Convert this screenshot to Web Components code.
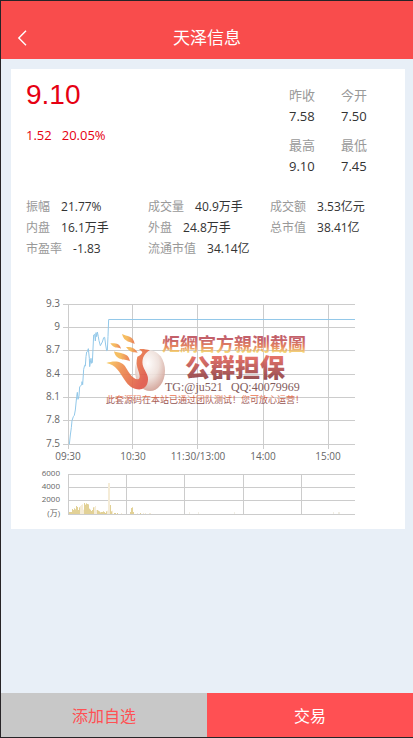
<!DOCTYPE html>
<html lang="zh-CN">
<head>
<meta charset="utf-8">
<meta name="viewport" content="width=device-width, initial-scale=1">
<title>天泽信息</title>
<style>
	body{
		margin: 0;
		font-family: "Open Sans", "Noto Sans CJK SC", sans-serif;
		color: #333;
	}
</style>
</head>
<body>
<stock-page>
	<page-header slot="header">天泽信息</page-header>
	<stock-card>
		<stock-quote price="9.10" change="1.52" percent="20.05%"></stock-quote>
		<stock-detail></stock-detail>
		<stock-chart></stock-chart>
	</stock-card>
	<action-bar slot="footer"></action-bar>
</stock-page>

<script>
class StockPage extends HTMLElement {

	constructor(){
		super();
		this.shadow = this.attachShadow({mode : 'open'});
		this.shadow.innerHTML = `
			<style>
				:host{
					display: flex;
					flex-direction: column;
					box-sizing: border-box;
					min-height: 100vh;
					border: 1px solid #272427;
					border-right: 0;
					background-color: #e8eff7;
				}
				main{
					flex: 1;
					padding: 10px 8px 10px 10px;
				}
			</style>
			<slot name="header"></slot>
			<main><slot></slot></main>
			<slot name="footer"></slot>
		`;
	}
}

class PageHeader extends HTMLElement {

	constructor(){
		super();
		this.shadow = this.attachShadow({mode : 'open'});
		this.shadow.innerHTML = `
			<style>
				:host{
					display: block;
					background-color: #f94c4c;
					color: #fff;
				}
				header{
					display: grid;
					grid-template-columns: 42px 1fr 42px;
					align-items: center;
					padding-top: 15px;
				}
				button{
					display: flex;
					align-items: center;
					height: 43px;
					padding: 0 0 0 16px;
					border: 0;
					background: none;
					color: inherit;
				}
				h1{
					margin: 0;
					font-size: 17px;
					font-weight: 400;
					line-height: 24px;
					text-align: center;
				}
			</style>
			<header>
				<button type="button" aria-label="返回">
					<svg width="10" height="16" viewBox="0 0 10 16" fill="none" stroke="currentColor" stroke-width="1.4"><path d="M9 .8 1.8 8 9 15.2"/></svg>
				</button>
				<h1><slot></slot></h1>
			</header>
		`;
	}
}

class StockCard extends HTMLElement {

	constructor(){
		super();
		this.shadow = this.attachShadow({mode : 'open'});
		this.shadow.innerHTML = `
			<style>
				:host{
					display: block;
					padding-top: 16px;
					background-color: #fff;
				}
			</style>
			<slot></slot>
		`;
	}
}

class StockQuote extends HTMLElement {

	constructor(){
		super();
		this.shadow = this.attachShadow({mode : 'open'});
	}

	connectedCallback(){
		this._updateRendering();
	}

	_updateRendering(){
		let items = [['昨收', '7.58'], ['今开', '7.50'], ['最高', '9.10'], ['最低', '7.45']];
		this.shadow.innerHTML = `
			<style>
				:host{
					display: flex;
					justify-content: space-between;
					padding: 0 38px 0 15px;
					font-size: 13px;
					line-height: 21px;
				}
				.now{
					color: #e60012;
				}
				.price{
					font-family: "Liberation Sans", sans-serif;
					font-size: 28px;
					line-height: 20px;
				}
				.change{
					display: flex;
					gap: 10px;
					margin-top: 20px;
				}
				dl{
					display: grid;
					grid-template-columns: auto auto;
					gap: 8px 26px;
					margin: 0;
				}
				dt{
					color: #999;
				}
				dd{
					margin: 0;
				}
			</style>
			<div class="now">
				<div class="price">${this.getAttribute('price')}</div>
				<div class="change"><span>${this.getAttribute('change')}</span><span>${this.getAttribute('percent')}</span></div>
			</div>
			<dl>${items.map(item => `<div><dt>${item[0]}</dt><dd>${item[1]}</dd></div>`).join('')}</dl>
		`;
	}
}

class StockDetail extends HTMLElement {

	constructor(){
		super();
		this.shadow = this.attachShadow({mode : 'open'});
	}

	connectedCallback(){
		let items = [
			['振幅', '21.77%'], ['成交量', '40.9万手'], ['成交额', '3.53亿元'],
			['内盘', '16.1万手'], ['外盘', '24.8万手'], ['总市值', '38.41亿'],
			['市盈率', '-1.83'], ['流通市值', '34.14亿']
		];
		this.shadow.innerHTML = `
			<style>
				:host{
					display: block;
					padding: 19px 13px 31px 15px;
					font-size: 12px;
					line-height: 21px;
				}
				dl{
					display: grid;
					grid-template-columns: repeat(3, 1fr);
					margin: 0;
				}
				div{
					display: flex;
					gap: 11px;
					white-space: nowrap;
				}
				dt{
					color: #999;
				}
				dd{
					margin: 0;
				}
			</style>
			<dl>${items.map(item => `<div><dt>${item[0]}</dt><dd>${item[1]}</dd></div>`).join('')}</dl>
		`;
	}
}

class StockChart extends HTMLElement {

	constructor(){
		super();
		this.shadow = this.attachShadow({mode : 'open'});
	}

	connectedCallback(){
		this._updateRendering();
	}

	_grid(){
		let rows = [14, 37, 60, 84, 107, 130, 154];
		let cols = [57, 121, 186, 252, 317];
		let vol_rows = [184, 197, 210, 224];
		let vol_cols = [57, 115, 173, 232, 290];
		return rows.map(y => `M52 ${y}.5H344`).join('')
			+ cols.map(x => `M${x}.5 14V159`).join('')
			+ vol_rows.map(y => `M57 ${y}.5H344`).join('')
			+ vol_cols.map(x => `M${x}.5 184V225`).join('');
	}

	_labels(){
		let prices = ['9.3', '9', '8.7', '8.4', '8.1', '7.8', '7.5'];
		let price_y = [17, 40, 63, 87, 110, 133, 157];
		let times = ['09:30', '10:30', '11:30/13:00', '14:00', '15:00'];
		let time_x = [57, 122, 187, 252, 317];
		let volumes = ['6000', '4000', '2000', '(万)'];
		let volume_y = [186, 199, 212, 226];
		return prices.map((t, i) => `<text x="49" y="${price_y[i]}" text-anchor="end">${t}</text>`).join('')
			+ times.map((t, i) => `<text x="${time_x[i]}" y="170" text-anchor="middle">${t}</text>`).join('')
			+ volumes.map((t, i) => `<text class="volume" x="49" y="${volume_y[i]}" text-anchor="end">${t}</text>`).join('');
	}

	// one bar per minute, three units of height make one pixel
	_bars(){
		let heights = [6, 6, 6, 15, 12, 17, 14, 24, 21, 12, 20, 24, 27, 29, 13, 33, 28, 32, 30, 29, 16, 13, 9, 12, 20, 21, 24,
			12, 12, 10, 8, 5, 6, 6, 8, 6, 3, 8, 10, 93, 93, 27, 8, 10, 0, 3, 3, 0, 3, 0, 0, 0, 3, 0, 0, 0, 0, 0, 0, 0, 0, 6,
			18, 20, 6, 0, 0, 0, 3, 0, 0, 3, 0, 0, 3, 0, 3, 0, 0, 0, 3, 3];
		let pale = [11, 12, 13, 14, 25, 26, 27, 38, 39, 40, 43, 52, 68, 74, 76, 80, 81];
		let bars = heights.map((h, i) => {
			let fill = pale.includes(i) ? '#f5ecd7' : '#e2d196';
			return h ? `<rect x="${58 + i}" y="${(672 - h) / 3}" width="1" height="${h / 3}" fill="${fill}"/>` : '';
		});
		return bars.join('')
			+ '<path d="M178 223h1M187 223h1M223 223h1M322 223h1M327 223h2" stroke="#e2dcc8"/>';
	}

	_updateRendering(){
		this.shadow.innerHTML = `
			<style>
				:host{
					display: block;
				}
				svg{
					display: block;
					width: 100%;
					height: auto;
				}
				text{
					font-size: 10px;
					fill: #666;
				}
				.volume{
					font-size: 8px;
				}
				.mark .title{
					font-size: 18px;
					font-weight: 700;
					fill: url(#title);
				}
				.mark .name{
					font-size: 25px;
					font-weight: 900;
					fill: url(#name);
				}
				.mark .contact{
					font-family: "Liberation Serif", serif;
					font-size: 12px;
					fill: #754b4b;
				}
				.mark .note{
					font-size: 9px;
					fill: url(#note);
				}
			</style>
			<svg viewBox="0 0 394 239" role="img" aria-label="分时图">
				<defs>
					<linearGradient id="title" x2="0" y2="1">
						<stop offset=".3" stop-color="#bd4f59"/>
						<stop offset=".6" stop-color="#e3794f"/>
						<stop offset=".85" stop-color="#f5d56b"/>
					</linearGradient>
					<linearGradient id="name" x2="0" y2="1">
						<stop offset=".2" stop-color="#e26359"/>
						<stop offset=".85" stop-color="#8e3f43"/>
					</linearGradient>
					<linearGradient id="note" x2="0" y2="1">
						<stop offset=".2" stop-color="#e8643d"/>
						<stop offset=".85" stop-color="#7d3c3c"/>
					</linearGradient>
					<linearGradient id="flame" gradientUnits="userSpaceOnUse" x1="15" y1="90" x2="125" y2="150">
						<stop offset="0" stop-color="#f9cf5c"/>
						<stop offset=".4" stop-color="#ee8b4c"/>
						<stop offset="1" stop-color="#df5444"/>
					</linearGradient>
					<linearGradient id="spark">
						<stop offset="0" stop-color="#f6b84f"/>
						<stop offset=".4" stop-color="#f5b552"/>
						<stop offset="1" stop-color="#e8714a"/>
					</linearGradient>
					<radialGradient id="ball" cx=".42" cy=".32" r=".75">
						<stop offset="0" stop-color="#fffdfc"/>
						<stop offset=".5" stop-color="#eedfd9"/>
						<stop offset="1" stop-color="#cc9488"/>
					</radialGradient>
				</defs>
				<path d="${this._grid()}" fill="none" stroke="#ccc"/>
				${this._bars()}
				<g transform="translate(19) scale(.33333)" fill="none" stroke="#92c8e9" stroke-width="3" stroke-linejoin="round">
					<path d="M118 463 121 435 124 413 126 392 130 380 133 376 136 360 140 320 142 307 144 328 147 318 149 290 155 285 156 275 158 284 161 238 164 226 166 228 168 200 170 186 172 185 175 176 178 205 179 230 183 205 185 220 187 218 191 135 194 133 196 153 198 128 200 140 202 126 205 140 207 152 211 167 217 156 221 143 224 142 227 165 230 182 232 181 234 140 236 88.500H975"/>
				</g>
				${this._labels()}
				<g class="mark" opacity=".9">
					<g transform="translate(91 40) scale(.33333)">
						<ellipse cx="144" cy="122" rx="45" ry="61" fill="url(#ball)"/>
						<path fill="url(#flame)" d="M13 99C38 91 60 93 72 113 82 130 91 144 105 148 117 148 113 134 109 122 104 108 102 94 106 80 115 77 119 72 121 66 118 63 115 60 111 57 124 56 134 58 144 61 128 69 119 84 122 104 126 121 140 133 138 149 137 164 130 174 117 178 96 180 80 169 68 150 52 126 42 104 13 99Z"/>
						<g fill="url(#spark)">
							<path d="M60 12C74 19 95 17 98 42 88 35 66 38 60 12Z"/>
							<path d="M25 40C40 39 54 40 57 56 46 51 36 57 25 40Z"/>
							<path d="M72 51C88 50 99 54 107 68 95 67 84 68 72 51Z"/>
							<path d="M36 64C52 72 80 66 84 94 72 86 42 95 36 64Z"/>
						</g>
					</g>
					<text class="title" x="151" y="61">炬網官方親測截圖</text>
					<text class="name" x="174" y="87">公群担保</text>
					<text class="contact" x="154" y="101">TG:@ju521</text>
					<text class="contact" x="220" y="101">QQ:40079969</text>
					<text class="note" x="95" y="113">此套源码在本站已通过团队测试！您可放心运营！</text>
				</g>
			</svg>
		`;
	}
}

class ActionBar extends HTMLElement {

	constructor(){
		super();
		this.shadow = this.attachShadow({mode : 'open'});
		this.shadow.innerHTML = `
			<style>
				:host{
					display: grid;
					grid-template-columns: 1fr 1fr;
				}
				button{
					height: 44px;
					padding: 0;
					border: 0;
					background-color: #c8c8c8;
					color: #ff5053;
					font-family: inherit;
					font-size: 16px;
				}
				.trade{
					background-color: #ff5053;
					color: #fff;
				}
			</style>
			<button type="button">添加自选</button>
			<button type="button" class="trade">交易</button>
		`;
	}
}

window.customElements.define('stock-page', StockPage);
window.customElements.define('page-header', PageHeader);
window.customElements.define('stock-card', StockCard);
window.customElements.define('stock-quote', StockQuote);
window.customElements.define('stock-detail', StockDetail);
window.customElements.define('stock-chart', StockChart);
window.customElements.define('action-bar', ActionBar);
</script>
</body>
</html>
